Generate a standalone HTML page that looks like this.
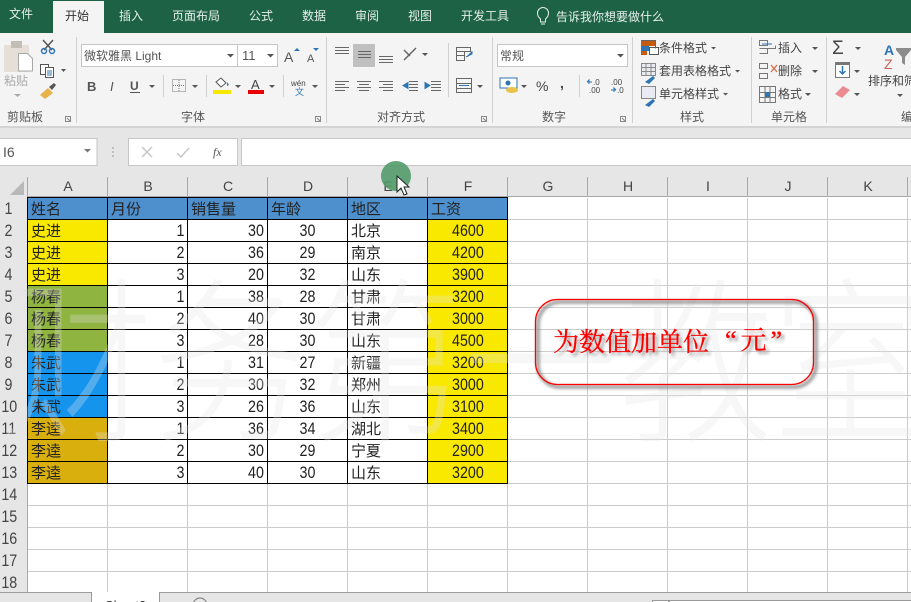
<!DOCTYPE html>
<html><head><meta charset="utf-8"><style>
html,body{margin:0;padding:0;width:911px;height:602px;overflow:hidden;background:#fff;font-family:"Liberation Sans","Noto Sans CJK SC",sans-serif}
.abs{position:absolute}
#grid{left:28px;top:198px;width:883px;height:394px;background-image:linear-gradient(to right,transparent 79px,#cccccc 79px),linear-gradient(to bottom,transparent 21px,#cccccc 21px);background-size:80px 22px}
#data{left:27px;top:197px;border-left:1px solid #000;border-top:1px solid #000;display:grid;grid-template-columns:repeat(6,80px);grid-auto-rows:22px;font-size:15px;color:#222}
#data div{box-sizing:border-box;border-right:1px solid #000;border-bottom:1px solid #000;line-height:23px;padding:0 3px;white-space:nowrap;overflow:hidden}
.h{background:#4e90cd}.y{background:#f9e900}.g{background:#8fb440}.b{background:#1594ee}.o{background:#d9af0e}
#data .r,#data .c{font-size:17px;line-height:21px}
#data span{display:inline-block}
.r{text-align:right}.c{text-align:center}
.r span{transform:scaleX(.84);transform-origin:right center}
.c span{transform:scaleX(.84);transform-origin:center center}
.rn{position:absolute;left:0;width:17px;text-align:center;font-size:17px;color:#444;height:22px;line-height:22px;transform:scaleX(.84);white-space:nowrap}
.ch{position:absolute;top:177px;width:80px;text-align:center;font-size:14px;color:#444;line-height:19px}
.ln{position:absolute;background:#a8a8a8}
text{font-family:"Liberation Sans","Noto Sans CJK SC",sans-serif}
</style></head><body>
<svg class="abs" style="left:0;top:0" width="911" height="177" viewBox="0 0 911 177">
<rect width="911" height="177" fill="#e6e6e6"/>
<rect width="911" height="33" fill="#1e6245"/>
<rect y="33" width="911" height="94" fill="#f4f4f4"/>
<rect y="126" width="911" height="2" fill="#d4d4d4"/>
<rect x="53" y="1" width="51" height="33" fill="#f4f4f4"/>
<g font-size="12" fill="#e4efe9">
<text x="9" y="18">文件</text><text x="65" y="20" fill="#333">开始</text><text x="119" y="20">插入</text><text x="172" y="20">页面布局</text><text x="249" y="20">公式</text><text x="302" y="20">数据</text><text x="355" y="20">审阅</text><text x="408" y="20">视图</text><text x="461" y="20">开发工具</text><text x="556" y="21">告诉我你想要做什么</text>
</g>
<g fill="none" stroke="#e4efe9" stroke-width="1"><path d="M540.500 19c-2-2-3-3-3-6a5.500 5.500 0 0 1 11 0c0 3-1 4-3 6v3h-5z"/><path d="M541 24h4"/></g>
<!-- separators -->
<g fill="#d0d0d0"><rect x="76" y="37" width="1" height="86"/><rect x="326" y="37" width="1" height="86"/><rect x="492" y="37" width="1" height="86"/><rect x="632" y="37" width="1" height="86"/><rect x="751" y="37" width="1" height="86"/><rect x="826" y="37" width="1" height="86"/>
<rect x="163" y="75" width="1" height="22"/><rect x="206" y="75" width="1" height="22"/><rect x="283" y="75" width="1" height="22"/><rect x="448" y="43" width="1" height="54"/><rect x="579" y="75" width="1" height="22"/></g>
<!-- group labels -->
<g font-size="12" fill="#555"><text x="7" y="121">剪贴板</text><text x="181" y="121">字体</text><text x="377" y="121">对齐方式</text><text x="542" y="121">数字</text><text x="680" y="121">样式</text><text x="771" y="121">单元格</text><text x="901" y="121">编</text></g>
<g fill="none" stroke="#888"><path d="M65.500 116.500h5v5h-5zM67 118l3 3"/><path d="M315.500 116.500h5v5h-5zM317 118l3 3"/><path d="M481.500 116.500h5v5h-5zM483 118l3 3"/><path d="M620.500 116.500h5v5h-5zM622 118l3 3"/></g>
<!-- clipboard -->
<rect x="4" y="45" width="25" height="27" fill="#e6dfd8"/><rect x="11" y="41" width="11" height="7" fill="#c4bdb5"/>
<path d="M18.500 53.500h9l5 5v12.500h-14z" fill="#fff" stroke="#a8a8a8"/>
<text x="4" y="85" font-size="12" fill="#aaa">粘贴</text><path d="M14 94h7l-3.500 3z" fill="#aaa"/>
<!-- scissors -->
<g fill="none" stroke="#555" stroke-width="1.500"><path d="M43 40l9 10M53 40l-9 10"/></g><g fill="none" stroke="#2e75b6" stroke-width="1.500"><circle cx="44" cy="51" r="2.500"/><circle cx="52" cy="51" r="2.500"/></g>
<!-- copy -->
<g fill="#fff" stroke="#555"><path d="M40.500 64.500h8v10h-8z"/><path d="M45.500 67.500h8v10h-8z"/></g><path d="M47 71h5M47 73h5M47 75h5" stroke="#2e75b6"/><path d="M61 69h5l-2.500 3z" fill="#555"/>
<!-- brush -->
<path d="M40 95l8-7 5 5-8 6z" fill="#e8b24a"/><path d="M49 87l5-4 2 2-4 5z" fill="#555"/>
<!-- font boxes -->
<rect x="81.500" y="44.500" width="196" height="22" fill="#fff" stroke="#c6c6c6"/><path d="M237.500 45v21" stroke="#c6c6c6"/>
<text x="84" y="60" font-size="12" fill="#555">微软雅黑 Light</text><text x="242" y="60" font-size="13" fill="#555">11</text>
<g fill="#555"><path d="M227 54h7l-3.500 3.500zM267 54h7l-3.500 3.500z"/>
<text x="284" y="62" font-size="14">A</text><path d="M294 51l3-3 3 3z" fill="#2e75b6"/><text x="307" y="62" font-size="11">A</text><path d="M313 48h6l-3 3z" fill="#2e75b6"/>
<text x="87" y="91" font-size="13" font-weight="bold">B</text><text x="110" y="91" font-size="13" font-style="italic">I</text><text x="130" y="90" font-size="12" font-weight="bold">U</text><rect x="130" y="92" width="10" height="1"/>
<path d="M149 85h6l-3 3zM192 85h6l-3 3zM235 85h6l-3 3zM269 85h6l-3 3zM312 85h6l-3 3z"/>
</g>
<path d="M172.500 79.500h13v12h-13zM179 80v12M173 85.500h12" fill="none" stroke="#777" stroke-dasharray="1 1"/>
<path d="M216 82l5-4 5 5-5 4z" fill="#fff" stroke="#555"/><path d="M227 82l2 3-2 1z" fill="#2e75b6"/><rect x="213" y="90" width="18" height="4" fill="#f6e800"/>
<text x="251" y="89" font-size="13" fill="#444">A</text><rect x="248" y="90" width="16" height="4" fill="#e80000"/>
<text x="291" y="86" font-size="8" fill="#444">wén</text><text x="295" y="95" font-size="9" fill="#2e75b6">文</text>
<!-- alignment -->
<rect x="353" y="44" width="22" height="23" fill="#c0c0c0"/>
<g stroke="#666" fill="none"><path d="M335 47.500h14M335 50.500h14M335 53.500h14M358 51.500h13M358 54.500h13M358 57.500h13M379 56.500h14M379 59.500h14M379 62.500h14"/>
<path d="M335 81.500h14M335 84.500h10M335 87.500h14M335 90.500h10M357 81.500h14M359 84.500h10M357 87.500h14M359 90.500h10M379 81.500h14M383 84.500h10M379 87.500h14M383 90.500h10"/>
<path d="M409 81.500h9M409 84.500h9M409 87.500h9M409 90.500h9M431 81.500h10M431 84.500h10M431 87.500h10M431 90.500h10"/>
<path d="M404 60l12-12M404 50l6 6" stroke-width="1.500"/><path d="M456.500 47.500h14v4h-14zM456.500 51.500h8v4h-8zM456.500 55.500h8v5h-8z"/>
<path d="M456.500 78.500h15v14h-15zM456.500 83.500h15M456.500 88.500h15"/></g>
<path d="M403 85.500l5-3v6zM430 85.500l-5-3v6zM466 57l6-3v-3M459 85.500h10" stroke="#2e75b6" fill="#2e75b6"/>
<path d="M422 53h6l-3 3zM477 85h6l-3 3zM521 85h6l-3 3z" fill="#555"/>
<!-- number -->
<rect x="497.500" y="44.500" width="130" height="22" fill="#fff" stroke="#c6c6c6"/><text x="500" y="60" font-size="12" fill="#555">常规</text><path d="M617 54h7l-3.500 3.500z" fill="#555"/>
<rect x="500" y="78" width="17" height="10" fill="#fff" stroke="#2e75b6"/><circle cx="508" cy="83" r="2.500" fill="#2e75b6"/><ellipse cx="512" cy="90" rx="6" ry="3" fill="#e9c34c"/>
<text x="536" y="91" font-size="14" fill="#444">%</text><text x="560" y="88" font-size="14" font-weight="bold" fill="#444">,</text>
<text x="593" y="85" font-size="8" fill="#444">.0</text><text x="589" y="93" font-size="8" fill="#444">.00</text><text x="611" y="85" font-size="8" fill="#444">.00</text><text x="617" y="93" font-size="8" fill="#444">.0</text>
<path d="M587 82h5M587 82l2-2v4M611 90h5M616 90l-2-2v4" stroke="#2e75b6" fill="none"/>
<!-- styles -->
<rect x="641" y="40" width="14" height="6" fill="#c55a11"/><rect x="641" y="46" width="8" height="5" fill="#2e75b6"/><rect x="641" y="51" width="6" height="4" fill="#c55a11"/><rect x="649.500" y="47.500" width="9" height="7" fill="#fff" stroke="#555"/><path d="M641.500 40.500h14v8" fill="none" stroke="#666"/>
<path d="M641.500 63.500h14v12h-14zM646 64v12M651 64v12M642 67.500h13M642 71.500h13M641.500 86.500h14v12h-14z" fill="#e8ecf2" stroke="#888"/><path d="M645 82l8-6 2 2-6 6zM645 105l8-6 2 2-6 6z" fill="#2e75b6"/>
<g font-size="12" fill="#444"><text x="659" y="52">条件格式</text><text x="659" y="75">套用表格格式</text><text x="659" y="98">单元格样式</text><text x="778" y="52">插入</text><text x="778" y="75">删除</text><text x="778" y="98">格式</text><text x="868" y="85">排序和筛</text></g>
<path d="M711 47h5l-2.500 2.500zM735 70h5l-2.500 2.500zM723 93h5l-2.500 2.500zM812 47h6l-3 3zM812 70h6l-3 3zM805 93h6l-3 3zM855 47h6l-3 3zM854 70h6l-3 3zM854 93h6l-3 3zM897 94h6l-3 3z" fill="#555"/>
<!-- cells -->
<g fill="none" stroke="#777"><path d="M759.500 40.500h8v5h-8zM759.500 48.500h16v-3M759.500 53.500h8v-5M767.500 48.500v5"/><path d="M759.500 63.500h8v5h-8zM759.500 73.500h8v5h-8z"/><path d="M759.500 86.500h16v16h-16zM759.500 92.500h16M759.500 97.500h16M765 87v15M770 87v15"/></g>
<path d="M762 44h10" stroke="#2e75b6"/><path d="M771 65l6 7M777 65l-6 7" stroke="#d9694a" stroke-width="1.300"/><rect x="765" y="92" width="5" height="5" fill="#2e75b6"/>
<!-- editing -->
<text x="832" y="54" font-size="19" fill="#444">Σ</text>
<rect x="835.500" y="62.500" width="14" height="15" fill="#fff" stroke="#777"/><rect x="835" y="62" width="15" height="3" fill="#777"/><path d="M842.500 66v7M839.500 71l3 3 3-3" stroke="#2e75b6" stroke-width="1.500" fill="none"/>
<path d="M835 94l8-8 7 4-8 8z" fill="#ec8a92"/>
<text x="884" y="55" font-size="14" font-weight="bold" fill="#2e75b6">A</text><text x="884" y="69" font-size="14" fill="#c5655a">Z</text><path d="M896 48h15v2l-6 7v8l-3-2v-6l-6-7z" fill="#8c8c8c"/>
<!-- formula bar -->
<rect x="-1" y="138.500" width="98" height="27" fill="#fff" stroke="#c6c6c6"/><text x="3" y="157" font-size="14" fill="#555">I6</text><path d="M84 149h7l-3.500 3.500z" fill="#777"/>
<path d="M113 147v2M113 151v2M113 155v2" stroke="#999"/>
<rect x="128.500" y="138.500" width="109" height="27" fill="#fff" stroke="#c6c6c6"/><rect x="241.500" y="138.500" width="675" height="27" fill="#fff" stroke="#c6c6c6"/>
<path d="M142 147l10 10M152 147l-10 10M177 153l4 4 8-9" stroke="#c8c8c8" stroke-width="1.500" fill="none"/>
<text x="213" y="156" font-size="12" font-style="italic" style="font-family:'Liberation Serif',serif" fill="#555">fx</text>
</svg>
<!-- sheet -->
<div class="abs" style="left:0;top:177px;width:911px;height:20px;background:#e6e6e6"></div>
<div class="abs" style="left:0;top:197px;width:27px;height:395px;background:#e6e6e6"></div>
<div class="abs" id="grid"></div>
<div class="ln" style="left:27px;top:177px;width:1px;height:415px"></div>
<div class="ln" style="left:27px;top:196px;width:884px;height:1px"></div>
<svg class="abs" style="left:0;top:177px" width="27" height="20"><path d="M10 18L24 4v14z" fill="#b8b8b8"/></svg>
<div class="ln" style="left:107px;top:177px;width:1px;height:20px"></div><div class="ln" style="left:187px;top:177px;width:1px;height:20px"></div><div class="ln" style="left:267px;top:177px;width:1px;height:20px"></div><div class="ln" style="left:347px;top:177px;width:1px;height:20px"></div><div class="ln" style="left:427px;top:177px;width:1px;height:20px"></div><div class="ln" style="left:507px;top:177px;width:1px;height:20px"></div><div class="ln" style="left:587px;top:177px;width:1px;height:20px"></div><div class="ln" style="left:667px;top:177px;width:1px;height:20px"></div><div class="ln" style="left:747px;top:177px;width:1px;height:20px"></div><div class="ln" style="left:827px;top:177px;width:1px;height:20px"></div><div class="ln" style="left:907px;top:177px;width:1px;height:20px"></div>
<div class="ch" style="left:28px">A</div><div class="ch" style="left:108px">B</div><div class="ch" style="left:188px">C</div><div class="ch" style="left:268px">D</div><div class="ch" style="left:348px">E</div><div class="ch" style="left:428px">F</div><div class="ch" style="left:508px">G</div><div class="ch" style="left:588px">H</div><div class="ch" style="left:668px">I</div><div class="ch" style="left:748px">J</div><div class="ch" style="left:828px">K</div>
<div class="rn" style="top:198px">1</div><div class="rn" style="top:220px">2</div><div class="rn" style="top:242px">3</div><div class="rn" style="top:264px">4</div><div class="rn" style="top:286px">5</div><div class="rn" style="top:308px">6</div><div class="rn" style="top:330px">7</div><div class="rn" style="top:352px">8</div><div class="rn" style="top:374px">9</div><div class="rn" style="top:396px">10</div><div class="rn" style="top:418px">11</div><div class="rn" style="top:440px">12</div><div class="rn" style="top:462px">13</div><div class="rn" style="top:484px">14</div><div class="rn" style="top:506px">15</div><div class="rn" style="top:528px">16</div><div class="rn" style="top:550px">17</div><div class="rn" style="top:572px;height:20px">18</div>
<div class="abs" id="data">
<div class="h">姓名</div><div class="h">月份</div><div class="h">销售量</div><div class="h">年龄</div><div class="h">地区</div><div class="h">工资</div>
<div class="y">史进</div><div class="r"><span>1</span></div><div class="r"><span>30</span></div><div class="c"><span>30</span></div><div>北京</div><div class="y c"><span>4600</span></div>
<div class="y">史进</div><div class="r"><span>2</span></div><div class="r"><span>36</span></div><div class="c"><span>29</span></div><div>南京</div><div class="y c"><span>4200</span></div>
<div class="y">史进</div><div class="r"><span>3</span></div><div class="r"><span>20</span></div><div class="c"><span>32</span></div><div>山东</div><div class="y c"><span>3900</span></div>
<div class="g">杨春</div><div class="r"><span>1</span></div><div class="r"><span>38</span></div><div class="c"><span>28</span></div><div>甘肃</div><div class="y c"><span>3200</span></div>
<div class="g">杨春</div><div class="r"><span>2</span></div><div class="r"><span>40</span></div><div class="c"><span>30</span></div><div>甘肃</div><div class="y c"><span>3000</span></div>
<div class="g">杨春</div><div class="r"><span>3</span></div><div class="r"><span>28</span></div><div class="c"><span>30</span></div><div>山东</div><div class="y c"><span>4500</span></div>
<div class="b">朱武</div><div class="r"><span>1</span></div><div class="r"><span>31</span></div><div class="c"><span>27</span></div><div>新疆</div><div class="y c"><span>3200</span></div>
<div class="b">朱武</div><div class="r"><span>2</span></div><div class="r"><span>30</span></div><div class="c"><span>32</span></div><div>郑州</div><div class="y c"><span>3000</span></div>
<div class="b">朱武</div><div class="r"><span>3</span></div><div class="r"><span>26</span></div><div class="c"><span>36</span></div><div>山东</div><div class="y c"><span>3100</span></div>
<div class="o">李逵</div><div class="r"><span>1</span></div><div class="r"><span>36</span></div><div class="c"><span>34</span></div><div>湖北</div><div class="y c"><span>3400</span></div>
<div class="o">李逵</div><div class="r"><span>2</span></div><div class="r"><span>30</span></div><div class="c"><span>29</span></div><div>宁夏</div><div class="y c"><span>2900</span></div>
<div class="o">李逵</div><div class="r"><span>3</span></div><div class="r"><span>40</span></div><div class="c"><span>30</span></div><div>山东</div><div class="y c"><span>3200</span></div>
</div>
<!-- watermark -->
<svg class="abs" style="left:0;top:240px" width="911" height="210"><text transform="translate(-2,188) scale(1,1.15)" x="0" y="0" font-size="155" fill="#e4e4e4" fill-opacity=".3" style="font-family:'Noto Sans CJK SC',sans-serif;font-weight:300">财务第一教室</text></svg>
<!-- callout -->
<svg class="abs" style="left:525px;top:290px" width="300" height="105" viewBox="0 0 300 105">
<defs><filter id="s" x="-10%" y="-20%" width="120%" height="140%"><feGaussianBlur stdDeviation="1.500"/></filter></defs>
<rect x="13" y="12" width="278" height="85" rx="22" fill="none" stroke="#888" stroke-width="3" filter="url(#s)"/>
<rect x="10.500" y="9.500" width="278" height="85" rx="22" fill="none" stroke="#f00" stroke-width="1.300"/>
</svg>
<div class="abs" style="left:553px;top:322px;font-size:26px;line-height:38px;color:#f00;-webkit-text-stroke:.3px #f00;text-shadow:3px 3px 3px #888;white-space:nowrap;font-family:'Noto Serif CJK SC',serif">为数值加单位</div>
<div class="abs" style="left:725px;top:322px;font-size:26px;line-height:38px;letter-spacing:4px;color:#f00;-webkit-text-stroke:.3px #f00;text-shadow:3px 3px 3px #888;white-space:nowrap;font-family:'Liberation Serif','Noto Serif CJK SC',serif">&ldquo;元&rdquo;</div>
<!-- bottom bar -->
<div class="abs" style="left:0;top:592px;width:911px;height:10px;background:#e6e6e6;border-top:1px solid #9a9f9c;box-sizing:border-box"></div>
<div class="abs" style="left:91px;top:592px;width:69px;height:10px;background:#fff;border-left:1px solid #999;border-right:1px solid #999;box-sizing:border-box;overflow:hidden"><span style="position:absolute;left:13px;top:6px;font-size:13px;line-height:15px;color:#333">Sheet2</span></div>
<svg class="abs" style="left:190px;top:592px" width="30" height="10"><circle cx="10" cy="13" r="7" fill="none" stroke="#777"/></svg>
<div class="abs" style="left:652px;top:600px;width:16px;height:2px;background:#fff;border-top:1px solid #999;border-left:1px solid #999;box-sizing:border-box"></div>
<div class="abs" style="left:668px;top:600px;width:243px;height:2px;background:#fff;border-top:1px solid #999;border-left:2px solid #999;box-sizing:border-box"></div>
<!-- cursor -->
<svg class="abs" style="left:380px;top:160px" width="32" height="40">
<circle cx="16" cy="16" r="15" fill="#4f9868" fill-opacity=".88"/>
<path d="M17 16v16l4-4 3 7 3-1-3-7h5z" fill="#fff" stroke="#222" stroke-width="1"/>
</svg>
</body></html>
